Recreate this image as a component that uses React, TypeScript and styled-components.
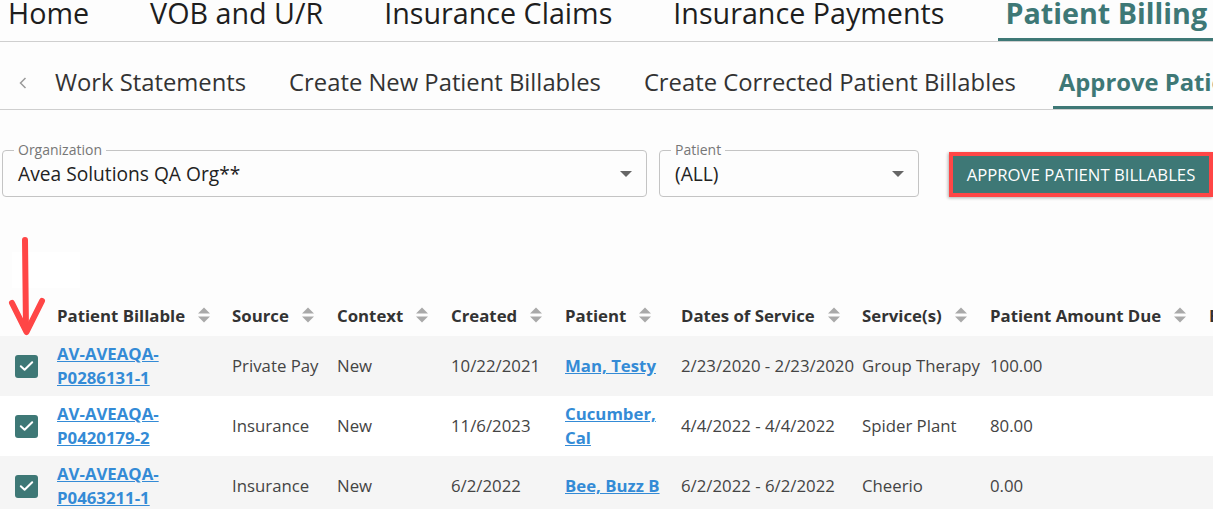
import React from "react";
import styled, { createGlobalStyle } from "styled-components";

const Global = createGlobalStyle`
  html, body { margin: 0; padding: 0; }
  body {
    background: #fdfdfd;
    font-family: "Open Sans", "Noto Sans", sans-serif;
    overflow: hidden;
    width: 1213px;
    height: 509px;
  }
  * { box-sizing: border-box; }
`;

const TEAL = "#3e7876";

const Page = styled.div`
  position: relative;
  width: 1213px;
  height: 509px;
  overflow: hidden;
`;

const TopNav = styled.nav`
  display: flex;
  gap: 47px;
  margin-top: -7px;
  padding-left: 1px;
  border-bottom: 1px solid #cfcfcf;
  white-space: nowrap;
`;

const NavTab = styled.div<{ $active?: boolean }>`
  flex-shrink: 0;
  font-size: 28.7px;
  line-height: 40px;
  padding: 0 7px 5px;
  border-bottom: 3px solid ${(p) => (p.$active ? TEAL : "transparent")};
  color: ${(p) => (p.$active ? TEAL : "#1e1e1e")};
  font-weight: ${(p) => (p.$active ? 700 : 400)};
`;

const SubNav = styled.nav`
  display: flex;
  align-items: flex-end;
  border-bottom: 1px solid #cfcfcf;
  white-space: nowrap;
  padding-top: 24px;
`;

const Chevron = styled.div`
  flex-shrink: 0;
  align-self: center;
  display: flex;
  padding: 0 22px 0 19px;
  margin-top: -10px;
`;

const SubTab = styled.div<{ $active?: boolean }>`
  flex-shrink: 0;
  font-size: 23.8px;
  line-height: 32px;
  padding: 0 6px 8px;
  border-bottom: 3px solid ${(p) => (p.$active ? TEAL : "transparent")};
  color: ${(p) => (p.$active ? TEAL : "#333")};
  font-weight: ${(p) => (p.$active ? 700 : 400)};
  & + & { margin-left: 31px; }
`;

const FilterRow = styled.div`
  display: flex;
  align-items: flex-end;
  margin-top: 32px;
  padding-left: 2px;
`;

const Field = styled.fieldset<{ $width: number }>`
  flex-shrink: 0;
  width: ${(p) => p.$width}px;
  margin: 0;
  border: 1px solid #c4c4c4;
  border-radius: 4px;
  padding: 0 14px 0 11px;
  & + & { margin-left: 12px; }
`;

const Legend = styled.legend`
  font-size: 14px;
  line-height: 16px;
  color: #777;
  padding: 0 4px;
`;

const FieldBody = styled.div`
  display: flex;
  align-items: center;
  justify-content: space-between;
  padding: 3px 0 9px 4px;
`;

const Value = styled.span`
  font-size: 19.2px;
  line-height: 26px;
  color: #222;
`;

const ApproveButton = styled.button`
  margin-left: 30px;
  height: 45px;
  width: 264px;
  flex-shrink: 0;
  border: 4px solid #ff4646;
  background: ${TEAL};
  color: #fff;
  font-family: inherit;
  font-size: 16.7px;
  text-transform: uppercase;
  padding: 0;
  white-space: nowrap;
  box-shadow: -1px 1px 3px rgba(0, 0, 0, 0.3);
`;

const Blank = styled.div`
  width: 68px;
  height: 36px;
  margin: 55px 0 10px 12px;
  background: #fff;
`;

const Table = styled.table`
  border-collapse: collapse;
  table-layout: fixed;
  width: 1420px;
`;

const Th = styled.th`
  height: 38px;
  padding: 0 6px 4px;
  text-align: left;
  font-size: 16.8px;
  font-weight: 700;
  color: #333;
  white-space: nowrap;
  vertical-align: middle;
`;

const HeadInner = styled.span`
  display: inline-flex;
  align-items: center;
  gap: 12px;
`;

const Tr = styled.tr<{ $shade?: boolean }>`
  background: ${(p) => (p.$shade ? "#f5f5f5" : "#fff")};
`;

const Td = styled.td`
  height: 60px;
  padding: 0 6px;
  font-size: 16.8px;
  line-height: 24px;
  color: #444;
  vertical-align: middle;
  white-space: nowrap;
`;

const CheckCell = styled.td`
  height: 60px;
  padding: 0 0 0 15px;
  vertical-align: middle;
`;

const Box = styled.span`
  display: flex;
  align-items: center;
  justify-content: center;
  width: 23px;
  height: 23px;
  border-radius: 3px;
  background: ${TEAL};
`;

const Link = styled.a`
  color: #348bd6;
  font-weight: 700;
  text-decoration: underline;
  white-space: normal;
  display: block;
`;

const Arrow = styled.svg`
  position: absolute;
  left: 0;
  top: 230px;
`;

const Sort = () => (
  <svg width="14" height="18" viewBox="0 0 14 18">
    <path d="M1 7.5 L7 1.5 L13 7.5 Z" fill="#a9a9a9" />
    <path d="M1 10.5 L7 16.5 L13 10.5 Z" fill="#a9a9a9" />
  </svg>
);

const Caret = () => (
  <svg width="12" height="6" viewBox="0 0 12 6">
    <path d="M0 0 L12 0 L6 6 Z" fill="#666" />
  </svg>
);

const Check = () => (
  <Box>
    <svg width="15" height="12" viewBox="0 0 15 12">
      <path d="M1.8 6.2 L5.6 9.8 L13.2 2.2" stroke="#fff" strokeWidth="2" fill="none" strokeLinecap="round" strokeLinejoin="round" />
    </svg>
  </Box>
);

const cols = [51, 175, 105, 114, 114, 116, 181, 128, 219, 217];
const headers = [
  "Patient Billable",
  "Source",
  "Context",
  "Created",
  "Patient",
  "Dates of Service",
  "Service(s)",
  "Patient Amount Due",
  "Estimated",
];

const rows = [
  { id: ["AV-AVEAQA-", "P0286131-1"], source: "Private Pay", ctx: "New", created: "10/22/2021", patient: ["Man, Testy"], dates: "2/23/2020 - 2/23/2020", svc: "Group Therapy", amt: "100.00" },
  { id: ["AV-AVEAQA-", "P0420179-2"], source: "Insurance", ctx: "New", created: "11/6/2023", patient: ["Cucumber,", "Cal"], dates: "4/4/2022 - 4/4/2022", svc: "Spider Plant", amt: "80.00" },
  { id: ["AV-AVEAQA-", "P0463211-1"], source: "Insurance", ctx: "New", created: "6/2/2022", patient: ["Bee, Buzz B"], dates: "6/2/2022 - 6/2/2022", svc: "Cheerio", amt: "0.00" },
];

export default function App() {
  return (
    <Page>
      <Global />
      <TopNav>
        <NavTab>Home</NavTab>
        <NavTab>VOB and U/R</NavTab>
        <NavTab>Insurance Claims</NavTab>
        <NavTab>Insurance Payments</NavTab>
        <NavTab $active>Patient Billing</NavTab>
      </TopNav>
      <SubNav>
        <Chevron>
          <svg width="8" height="12" viewBox="0 0 8 12">
            <path d="M6.5 1 L1.5 6 L6.5 11" stroke="#9a9a9a" strokeWidth="1.5" fill="none" />
          </svg>
        </Chevron>
        <SubTab>Work Statements</SubTab>
        <SubTab>Create New Patient Billables</SubTab>
        <SubTab>Create Corrected Patient Billables</SubTab>
        <SubTab $active>Approve Patient Billables</SubTab>
      </SubNav>
      <FilterRow>
        <Field $width={645}>
          <Legend>Organization</Legend>
          <FieldBody>
            <Value>Avea Solutions QA Org**</Value>
            <Caret />
          </FieldBody>
        </Field>
        <Field $width={260}>
          <Legend>Patient</Legend>
          <FieldBody>
            <Value>(ALL)</Value>
            <Caret />
          </FieldBody>
        </Field>
        <ApproveButton>Approve Patient Billables</ApproveButton>
      </FilterRow>
      <Blank />
      <Table>
        <colgroup>
          {cols.map((w, i) => (
            <col key={i} style={{ width: w }} />
          ))}
        </colgroup>
        <thead>
          <tr>
            <Th />
            {headers.map((h) => (
              <Th key={h}>
                <HeadInner>
                  {h}
                  <Sort />
                </HeadInner>
              </Th>
            ))}
          </tr>
        </thead>
        <tbody>
          {rows.map((r, i) => (
            <Tr key={i} $shade={i % 2 === 0}>
              <CheckCell>
                <Check />
              </CheckCell>
              <Td>
                <Link href="#">
                  {r.id[0]}
                  <br />
                  {r.id[1]}
                </Link>
              </Td>
              <Td>{r.source}</Td>
              <Td>{r.ctx}</Td>
              <Td>{r.created}</Td>
              <Td>
                <Link href="#">
                  {r.patient.map((p, j) => (
                    <React.Fragment key={j}>
                      {j > 0 && <br />}
                      {p}
                    </React.Fragment>
                  ))}
                </Link>
              </Td>
              <Td>{r.dates}</Td>
              <Td>{r.svc}</Td>
              <Td>{r.amt}</Td>
              <Td />
            </Tr>
          ))}
        </tbody>
      </Table>
      <Arrow width="60" height="110" viewBox="0 0 60 110">
        <path d="M25 10 L26 99" stroke="#ff4646" strokeWidth="6" strokeLinecap="round" fill="none" />
        <path d="M12 73 L26.5 102 L42 71" stroke="#ff4646" strokeWidth="6" strokeLinecap="round" strokeLinejoin="round" fill="none" />
      </Arrow>
    </Page>
  );
}
